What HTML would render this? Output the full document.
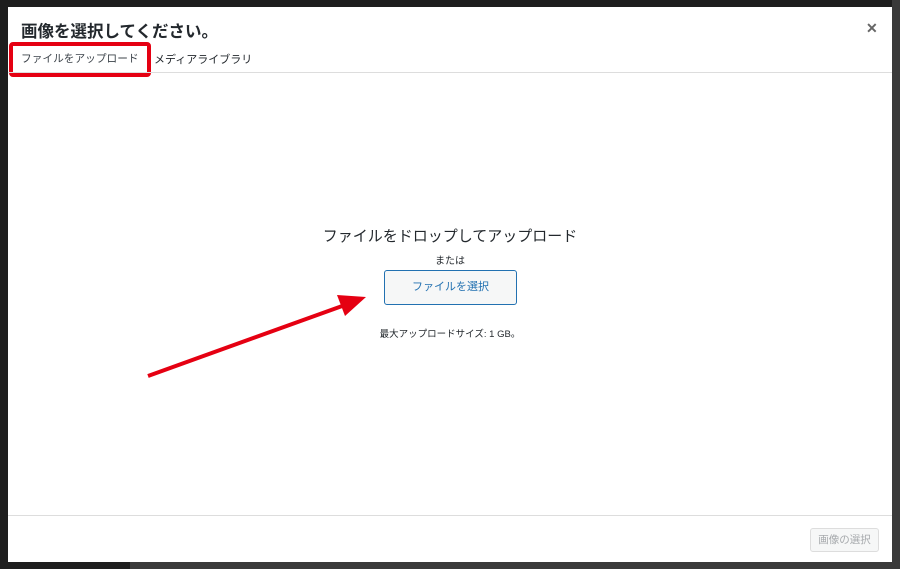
<!DOCTYPE html>
<html><head><meta charset="utf-8"><style>
*{margin:0;padding:0;box-sizing:border-box}
body{width:900px;height:569px;background:#1e1e1e;position:relative;overflow:hidden;font-family:"Liberation Sans","Noto Sans CJK JP",sans-serif}
.rb{position:absolute;left:892px;top:0;width:8px;height:569px;background:#3a3a3a}
.bb{position:absolute;left:130px;top:562px;width:762px;height:7px;background:#3a3a3a}
.m{position:absolute;left:8px;top:7px;width:884px;height:555px;background:#fff}
.t{position:absolute;left:13px;top:11px;font-size:16.5px;font-weight:bold;color:#23282d;white-space:nowrap}
.x{position:absolute;left:858px;top:13px;font-size:14px;color:#666;font-weight:bold}
.hl{position:absolute;left:0;top:65px;width:884px;height:1px;background:#ddd}
.tab1{position:absolute;left:1px;top:35px;width:142px;height:35px;border:4px solid #e50012;border-radius:4px;font-size:10.7px;color:#3c434a;padding:5px 0 0 8px;white-space:nowrap}
.tab2{position:absolute;left:146px;top:44px;font-size:11px;color:#23282d;white-space:nowrap}
.c{position:absolute;left:0;width:884px;text-align:center;color:#23282d;white-space:nowrap}
.btn{position:absolute;left:376px;top:263px;width:133px;height:35px;border:1px solid #2271b1;border-radius:3px;background:#f6f7f7;color:#2271b1;font-size:11px;text-align:center;line-height:33px}
.fl{position:absolute;left:0;top:508px;width:884px;height:1px;background:#ddd}
.sel{position:absolute;left:802px;top:521px;width:69px;height:24px;border:1px solid #ddd;border-radius:3px;background:#f6f7f7;color:#a7aaad;font-size:10.5px;text-align:center;line-height:22px}
</style></head><body>
<div class="rb"></div><div class="bb"></div>
<div class="m">
<div class="t">画像を選択してください。</div>
<div class="x">✕</div>
<div class="tab1">ファイルをアップロード</div>
<div class="tab2">メディアライブラリ</div>
<div class="hl"></div>
<div class="c" style="top:218px;font-size:15px">ファイルをドロップしてアップロード</div>
<div class="c" style="top:245px;font-size:10px">または</div>
<div class="btn">ファイルを選択</div>
<div class="c" style="top:319px;font-size:9.5px">最大アップロードサイズ: 1 GB。</div>
<div class="fl"></div>
<div class="sel">画像の選択</div>
</div>
<svg style="position:absolute;left:0;top:0" width="900" height="569">
<line x1="148" y1="376" x2="345" y2="305" stroke="#e50012" stroke-width="4"/>
<polygon points="366,297 337,295 345,316" fill="#e50012"/>
</svg>
</body></html>
